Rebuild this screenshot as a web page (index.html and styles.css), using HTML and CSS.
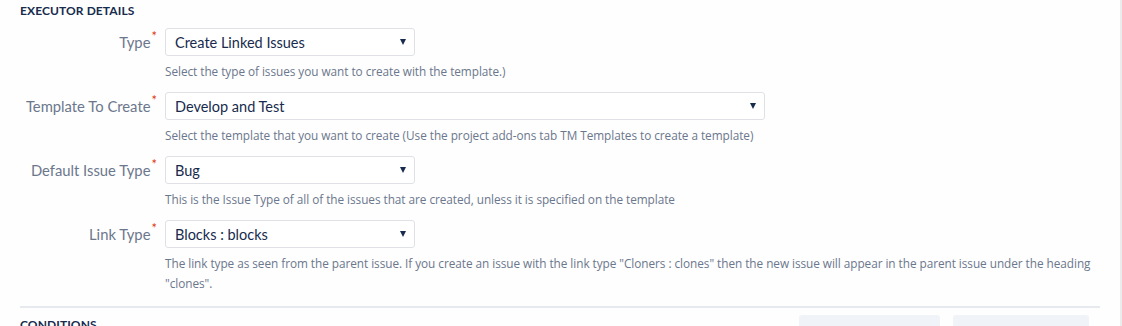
FILE: index.html
```html
<!DOCTYPE html>
<html lang="en">
<head>
    <meta charset="UTF-8">
    <title>Executor Details</title>
    <link rel="stylesheet" href="styles.css">
</head>
<body>
    <div class="page">
        <h2 class="section-title">EXECUTOR DETAILS</h2>

        <div class="field">
            <label class="field-label">Type<span class="req">*</span></label>
            <div class="field-body">
                <div class="select short"><span>Create Linked Issues</span><i class="caret"></i></div>
                <div class="help">Select the type of issues you want to create with the template.)</div>
            </div>
        </div>

        <div class="field">
            <label class="field-label">Template To Create<span class="req">*</span></label>
            <div class="field-body">
                <div class="select long"><span>Develop and Test</span><i class="caret"></i></div>
                <div class="help">Select the template that you want to create (Use the project add-ons tab TM Templates to create a template)</div>
            </div>
        </div>

        <div class="field">
            <label class="field-label">Default Issue Type<span class="req">*</span></label>
            <div class="field-body">
                <div class="select short"><span>Bug</span><i class="caret"></i></div>
                <div class="help">This is the Issue Type of all of the issues that are created, unless it is specified on the template</div>
            </div>
        </div>

        <div class="field">
            <label class="field-label">Link Type<span class="req">*</span></label>
            <div class="field-body">
                <div class="select short"><span>Blocks : blocks</span><i class="caret"></i></div>
                <div class="help">The link type as seen from the parent issue. If you create an issue with the link type "Cloners : clones" then the new issue will appear in the parent issue under the heading "clones".</div>
            </div>
        </div>

        <div class="divider"></div>

        <div class="conditions">
            <h2 class="section-title">CONDITIONS</h2>
            <div class="actions">
                <button class="btn wide">+ Insert Field Block</button>
                <button class="btn">+ Add Condition</button>
            </div>
        </div>
    </div>
</body>
</html>
```

FILE: styles.css
```css
body {
    margin: 0;
    background: #fefefe;
    font-family: Lato, "Open Sans", sans-serif;
    color: #172b4d;
    overflow: hidden;
    border-right: 2px solid #ececec;
    height: 326px;
    box-sizing: border-box;
}
.page {
    padding: 3px 0 0 20px;
    width: 1080px;
}
.section-title {
    margin: 0;
    font-size: 12px;
    font-weight: 700;
    line-height: 16px;
    color: #172b4d;
    letter-spacing: 0.1px;
}
.field {
    display: flex;
    margin-top: 9px;
}
.field + .field {
    margin-top: 11px;
}
.field-label {
    width: 137px;
    text-align: right;
    padding-right: 8px;
    font-size: 14.8px;
    line-height: 28px;
    color: #6b778c;
    flex-shrink: 0;
    white-space: nowrap;
}
.req {
    color: #de350b;
    font-size: 13px;
    vertical-align: top;
    line-height: 16px;
    margin-left: 1px;
}
.field-body {
    flex: 1;
}
.select {
    display: flex;
    align-items: center;
    justify-content: space-between;
    height: 28px;
    box-sizing: border-box;
    border: 1px solid #dfe1e6;
    border-radius: 3px;
    background: #fff;
    padding: 0 8px 0 9px;
    font-size: 14.5px;
    color: #172b4d;
}
.select.short {
    width: 250px;
}
.select.long {
    width: 600px;
}
.caret {
    width: 0;
    height: 0;
    border-left: 3px solid transparent;
    border-right: 3px solid transparent;
    border-top: 6px solid #172b4d;
}
.help {
    margin-top: 5px;
    font-family: "Open Sans", sans-serif;
    font-size: 11.8px;
    letter-spacing: -0.05px;
    line-height: 20px;
    color: #6b778c;
}
.divider {
    height: 2px;
    background: #e6e9ed;
    margin-top: 13px;
}
.conditions {
    display: flex;
    justify-content: space-between;
    align-items: flex-start;
}
.conditions .section-title {
    margin-top: 9px;
}
.actions {
    display: flex;
    gap: 13px;
    margin-top: 7px;
    margin-right: 11px;
}
.btn {
    width: 136px;
    height: 30px;
    border: none;
    border-radius: 3px;
    background: #f0f4f8;
    color: #505f79;
    font-family: Lato, "Open Sans", sans-serif;
    font-size: 14px;
    padding-top: 6px;
}
.btn.wide {
    width: 141px;
}
```
